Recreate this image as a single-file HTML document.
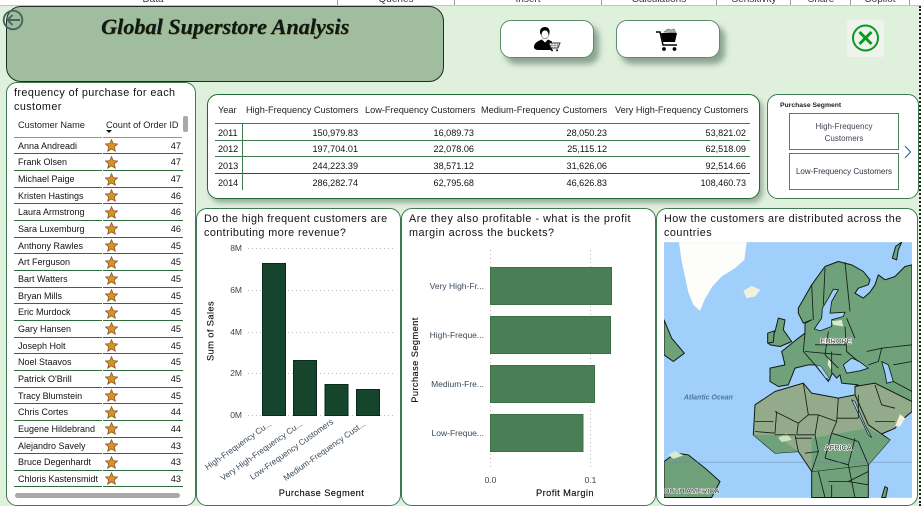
<!DOCTYPE html>
<html><head><meta charset="utf-8">
<style>
*{box-sizing:border-box;margin:0;padding:0}
html,body{width:921px;height:506px;overflow:hidden}
body{background:#dff0dd;font-family:"Liberation Sans",sans-serif;color:#111;position:relative}
.a{position:absolute;white-space:nowrap}
.panel{position:absolute;background:#fff;border:1px solid #3d7a50;border-radius:11px}
#top{left:0;top:0;width:921px;height:6px;background:#fff;border-bottom:1px solid #bcc8bc;overflow:hidden}
#top span{position:absolute;top:-6.5px;font-size:10px;color:#333;transform:translateX(-50%)}
#top i{position:absolute;top:0;width:1px;height:5px;background:#999}
.th{font-size:9.2px;top:105px;color:#222}
.n{font-size:9.1px;text-align:right;width:100px;color:#111}
.l{position:absolute;height:1px;left:215px;width:535px;background:#3d7a50}
#rows{position:absolute;left:14px;top:137.7px;width:169px}
.r{display:flex;height:16.67px}
.r b{font-weight:400;font-size:9px;line-height:15px;padding-top:1px;height:16.67px;width:88px;padding-left:4px;margin-right:1px;border-bottom:1px solid #2f6a3d;white-space:nowrap;overflow:hidden}
.r u{text-decoration:none;font-size:9.2px;line-height:15px;padding-top:1px;height:16.67px;width:80px;text-align:right;padding-right:2px;border-bottom:1px solid #2f6a3d;position:relative}
.r svg{position:absolute;left:2px;top:1.500px;width:13px;height:13px}
.ct{font-size:10.8px;line-height:13.5px;letter-spacing:.42px;color:#111}
</style></head><body>
<svg width="0" height="0" style="position:absolute"><defs><polygon id="st" points="6.5,0.6 8.2,4.6 12.5,5 9.3,7.8 10.3,12.2 6.5,9.9 2.7,12.2 3.7,7.8 0.5,5 4.8,4.6" fill="#d8922c" stroke="#8a5a1c" stroke-width=".8"/></defs></svg>

<div id="top" class="a">
<span style="left:153px">Data</span><span style="left:396px">Queries</span><span style="left:528px">Insert</span><span style="left:659px">Calculations</span><span style="left:754px">Sensitivity</span><span style="left:821px">Share</span><span style="left:880px">Copilot</span>
<i style="left:337px"></i><i style="left:454px"></i><i style="left:601px"></i><i style="left:716px"></i><i style="left:790px"></i><i style="left:850px"></i><i style="left:909px"></i>
</div>
<div class="a" style="left:919px;top:6px;width:0;height:500px;border-left:2px dotted #222"></div>

<!-- header -->
<div class="a" style="left:6px;top:6px;width:438px;height:76px;background:#a0bda0;border:1px solid #1f2d22;border-radius:15px"></div>
<div class="a" style="left:101px;top:14px;font:italic bold 22.2px 'Liberation Serif',serif;color:#0c1a14;text-shadow:.6px .6px 0 #6a5a20">Global Superstore Analysis</div>
<svg class="a" style="left:2px;top:8px" width="24" height="24" viewBox="0 0 24 24" fill="none" stroke="#47665a" stroke-width="1.900"><circle cx="11" cy="12" r="9.300"/><path d="M18 12H5.500M10.500 7l-5 5 5 5"/></svg>

<!-- buttons -->
<div class="a" style="left:500px;top:20px;width:94px;height:38px;background:#fff;border:1px solid #5f8a70;border-radius:11px;box-shadow:5px 6px 6px rgba(70,100,80,.55)"></div>
<div class="a" style="left:616px;top:20px;width:104px;height:38px;background:#fff;border:1px solid #5f8a70;border-radius:11px;box-shadow:5px 6px 6px rgba(70,100,80,.55)"></div>
<svg class="a" style="left:534px;top:27px" width="28" height="25" viewBox="0 0 28 25"><path d="M6 6C5.500 2 8 0 11 0S16 2 15.500 6L15 8C14 4.500 8 4.500 7 8Z" fill="#000"/><ellipse cx="11" cy="7.500" rx="3.600" ry="4.300" fill="#fff" stroke="#222" stroke-width=".5"/><path d="M0 20C0 15.500 5 13.500 8 12.500L11 15.500 14 12.500 18 14.500V23H5C2 23 0 22 0 20Z" fill="#000"/><path d="M15 16h11l-2 5h-7z" fill="#fff" stroke="#333" stroke-width="1"/><path d="M18 16v5M21 16v5M23.500 16v5M16 18.500h9" stroke="#666" stroke-width=".6"/><circle cx="18" cy="23.300" r="1.100" fill="#222"/><circle cx="23" cy="23.300" r="1.100" fill="#222"/></svg>
<svg class="a" style="left:655px;top:27px" width="26" height="25" viewBox="0 0 26 25"><path d="M9 5l4-3 3 1 3-1 2 4z" fill="#aaa" stroke="#666" stroke-width=".6"/><path d="M1 5h4l3 13h14" fill="none" stroke="#000" stroke-width="1.500"/><path d="M6 6h16l-2 9H8z" fill="#000"/><circle cx="9" cy="22" r="1.900" fill="#000"/><circle cx="19.500" cy="22" r="1.900" fill="#000"/></svg>
<div class="a" style="left:847px;top:20px;width:37px;height:37px;background:#eef3ee"></div>
<svg class="a" style="left:851px;top:24px" width="30" height="30" viewBox="0 0 30 30" fill="none" stroke="#0a9a1e"><circle cx="14.500" cy="14" r="12.500" stroke-width="2"/><path d="M8.500 8l12 12M20.500 8l-12 12" stroke-width="3"/></svg>

<!-- left list -->
<div class="panel" style="left:6px;top:82px;width:190px;height:424px"></div>
<div class="a ct" style="left:14px;top:87px">frequency of purchase for each<br>customer</div>
<div class="a" style="left:18px;top:120px;font-size:9.200px;color:#222">Customer Name</div>
<div class="a" style="left:106px;top:120px;font-size:9.200px;color:#222">Count of Order ID</div>
<div class="a" style="left:106px;top:130px;width:0;height:0;border-left:3px solid transparent;border-right:3px solid transparent;border-top:3.500px solid #111"></div>
<div class="a" style="left:14px;top:137px;width:88px;height:1px;background:#7f9f88"></div>
<div class="a" style="left:103px;top:137px;width:79px;height:1px;background:#7f9f88"></div>
<div class="a" style="left:183px;top:116px;width:5px;height:16px;background:#a8a8a8;border-radius:2px"></div>
<div id="rows">
<div class="r"><b>Anna Andreadi</b><u><svg viewBox="0 0 13 13"><use href="#st"/></svg>47</u></div>
<div class="r"><b>Frank Olsen</b><u><svg viewBox="0 0 13 13"><use href="#st"/></svg>47</u></div>
<div class="r"><b>Michael Paige</b><u><svg viewBox="0 0 13 13"><use href="#st"/></svg>47</u></div>
<div class="r"><b>Kristen Hastings</b><u><svg viewBox="0 0 13 13"><use href="#st"/></svg>46</u></div>
<div class="r"><b>Laura Armstrong</b><u><svg viewBox="0 0 13 13"><use href="#st"/></svg>46</u></div>
<div class="r"><b>Sara Luxemburg</b><u><svg viewBox="0 0 13 13"><use href="#st"/></svg>46</u></div>
<div class="r"><b>Anthony Rawles</b><u><svg viewBox="0 0 13 13"><use href="#st"/></svg>45</u></div>
<div class="r"><b>Art Ferguson</b><u><svg viewBox="0 0 13 13"><use href="#st"/></svg>45</u></div>
<div class="r"><b>Bart Watters</b><u><svg viewBox="0 0 13 13"><use href="#st"/></svg>45</u></div>
<div class="r"><b>Bryan Mills</b><u><svg viewBox="0 0 13 13"><use href="#st"/></svg>45</u></div>
<div class="r"><b>Eric Murdock</b><u><svg viewBox="0 0 13 13"><use href="#st"/></svg>45</u></div>
<div class="r"><b>Gary Hansen</b><u><svg viewBox="0 0 13 13"><use href="#st"/></svg>45</u></div>
<div class="r"><b>Joseph Holt</b><u><svg viewBox="0 0 13 13"><use href="#st"/></svg>45</u></div>
<div class="r"><b>Noel Staavos</b><u><svg viewBox="0 0 13 13"><use href="#st"/></svg>45</u></div>
<div class="r"><b>Patrick O'Brill</b><u><svg viewBox="0 0 13 13"><use href="#st"/></svg>45</u></div>
<div class="r"><b>Tracy Blumstein</b><u><svg viewBox="0 0 13 13"><use href="#st"/></svg>45</u></div>
<div class="r"><b>Chris Cortes</b><u><svg viewBox="0 0 13 13"><use href="#st"/></svg>44</u></div>
<div class="r"><b>Eugene Hildebrand</b><u><svg viewBox="0 0 13 13"><use href="#st"/></svg>44</u></div>
<div class="r"><b>Alejandro Savely</b><u><svg viewBox="0 0 13 13"><use href="#st"/></svg>43</u></div>
<div class="r"><b>Bruce Degenhardt</b><u><svg viewBox="0 0 13 13"><use href="#st"/></svg>43</u></div>
<div class="r"><b>Chloris Kastensmidt</b><u><svg viewBox="0 0 13 13"><use href="#st"/></svg>43</u></div>
</div>
<div class="a" style="left:15px;top:493px;width:165px;height:5px;background:#a8a8a8;border-radius:3px"></div>

<!-- table -->
<div class="panel" style="left:207px;top:94px;width:553px;height:105px;border-color:#1f6a35;box-shadow:3px 4px 5px rgba(70,100,80,.45)"></div>
<div class="a th" style="left:218px">Year</div>
<div class="a th" style="left:246px">High-Frequency Customers</div>
<div class="a th" style="left:365px">Low-Frequency Customers</div>
<div class="a th" style="left:481px">Medium-Frequency Customers</div>
<div class="a th" style="left:615px">Very High-Frequency Customers</div>
<div class="l" style="top:123px"></div><div class="l" style="top:140px"></div><div class="l" style="top:156px"></div><div class="l" style="top:173px;background:#1f5a30"></div>
<div class="a" style="left:242px;top:123px;width:1px;height:67px;background:#3d7a50"></div>
<div class="a" style="left:218px;top:128px;font-size:9.100px">2011</div><div class="a" style="left:218px;top:144px;font-size:9.100px">2012</div><div class="a" style="left:218px;top:161px;font-size:9.100px">2013</div><div class="a" style="left:218px;top:178px;font-size:9.100px">2014</div>
<div class="a n" style="left:258px;top:128px">150,979.83</div><div class="a n" style="left:374px;top:128px">16,089.73</div><div class="a n" style="left:507px;top:128px">28,050.23</div><div class="a n" style="left:646px;top:128px">53,821.02</div>
<div class="a n" style="left:258px;top:144px">197,704.01</div><div class="a n" style="left:374px;top:144px">22,078.06</div><div class="a n" style="left:507px;top:144px">25,115.12</div><div class="a n" style="left:646px;top:144px">62,518.09</div>
<div class="a n" style="left:258px;top:161px">244,223.39</div><div class="a n" style="left:374px;top:161px">38,571.12</div><div class="a n" style="left:507px;top:161px">31,626.06</div><div class="a n" style="left:646px;top:161px">92,514.66</div>
<div class="a n" style="left:258px;top:178px">286,282.74</div><div class="a n" style="left:374px;top:178px">62,795.68</div><div class="a n" style="left:507px;top:178px">46,626.83</div><div class="a n" style="left:646px;top:178px">108,460.73</div>

<!-- slicer -->
<div class="panel" style="left:767px;top:94px;width:152px;height:105px"></div>
<div class="a" style="left:780px;top:102px;font-size:6.800px;font-weight:bold;color:#222">Purchase Segment</div>
<div class="a" style="left:789px;top:113px;width:110px;height:37px;border:1px solid #4d8560;font-size:8px;line-height:12px;text-align:center;padding-top:7px;color:#445">High-Frequency<br>Customers</div>
<div class="a" style="left:789px;top:153px;width:110px;height:37px;border:1px solid #4d8560;font-size:8px;line-height:35px;text-align:center;color:#334">Low-Frequency Customers</div>
<svg class="a" style="left:903px;top:145px" width="10" height="14" fill="none" stroke="#2a6f9a" stroke-width="1.200"><path d="M2 1l5.500 6L2 13"/></svg>

<!-- panels -->
<div class="panel" style="left:196px;top:208px;width:205px;height:298px"></div>
<div class="panel" style="left:401px;top:208px;width:255px;height:298px"></div>
<div class="panel" style="left:656px;top:208px;width:262px;height:298px"></div>
<div class="a ct" style="left:204px;top:213px">Do the high frequent customers are<br>contributing more revenue?</div>
<div class="a ct" style="left:409px;top:213px;letter-spacing:.52px">Are they also profitable - what is the profit<br>margin across the buckets?</div>
<div class="a ct" style="left:664px;top:213px;letter-spacing:.48px">How the customers are distributed across the<br>countries</div>

<!-- column + bar charts -->
<svg class="a" style="left:0;top:0" width="921" height="506" font-family="Liberation Sans, sans-serif">
<g stroke="#bbb" stroke-dasharray="1 3" stroke-width="1">
<path d="M248 248.500H393M248 290.500H393M248 332.500H393M248 373.500H393M248 415.500H393"/>
<path d="M490.500 250V470M590.500 250V470"/>
</g>
<g font-size="8.500" fill="#444" text-anchor="end">
<text x="242" y="251">8M</text><text x="242" y="293">6M</text><text x="242" y="335">4M</text><text x="242" y="376">2M</text><text x="242" y="418">0M</text>
</g>
<g fill="#16452d" stroke="#0b2a1b" stroke-width="1">
<rect x="262.500" y="263.500" width="23" height="152"/><rect x="293.500" y="360.500" width="23" height="55"/><rect x="325" y="384.500" width="23" height="31"/><rect x="356.500" y="389.500" width="23" height="26"/>
</g>
<text transform="translate(213.500,331) rotate(-90)" font-size="9.300" text-anchor="middle" fill="#111" letter-spacing=".4" stroke="#111" stroke-width=".15">Sum of Sales</text>
<g font-size="8.300" fill="#3a4a5a" text-anchor="end">
<text transform="translate(272,425) rotate(-35)">High-Frequency Cu...</text>
<text transform="translate(303,425) rotate(-35)">Very High-Frequency Cu...</text>
<text transform="translate(334,423) rotate(-35)">Low-Frequency Customers</text>
<text transform="translate(366,425) rotate(-35)">Medium-Frequency Cust...</text>
</g>
<text x="321.500" y="496" font-size="9.300" text-anchor="middle" letter-spacing=".4" fill="#111" stroke="#111" stroke-width=".15">Purchase Segment</text>

<g fill="#4a7f55" stroke="#3c7048" stroke-width="1">
<rect x="490.500" y="267.500" width="121" height="37"/><rect x="490.500" y="316.500" width="120" height="37"/><rect x="490.500" y="365.500" width="104" height="37"/><rect x="490.500" y="414.500" width="92.500" height="37"/>
</g>
<g font-size="8.500" fill="#3a4a5a" text-anchor="end">
<text x="484" y="289">Very High-Fr...</text><text x="484" y="338">High-Freque...</text><text x="484" y="387">Medium-Fre...</text><text x="484" y="436">Low-Freque...</text>
</g>
<text x="490.500" y="483" font-size="8.500" fill="#444" text-anchor="middle">0.0</text>
<text x="590.500" y="483" font-size="8.500" fill="#444" text-anchor="middle">0.1</text>
<text transform="translate(418,360) rotate(-90)" font-size="9.300" text-anchor="middle" fill="#111" letter-spacing=".4" stroke="#111" stroke-width=".15">Purchase Segment</text>
<text x="565" y="496" font-size="9.300" text-anchor="middle" letter-spacing=".4" fill="#111" stroke="#111" stroke-width=".15">Profit Margin</text>
</svg>

<!-- map -->
<svg class="a" style="left:664px;top:242px" width="248" height="256" viewBox="27 112 744 767" stroke-linejoin="round">
<rect x="27" y="112" width="744" height="767" fill="#9fcffa"/>
<path d="M72 112H275L268 165 240 190 200 215 172 245 150 282 135 318 115 300 100 262 90 215 80 170Z" fill="#fdfdfa"/>
<path d="M265 258 290 243 316 255 300 275 275 280Z" fill="#f2f2dc"/>
<g fill="#6fa27a" stroke="#101a14" stroke-width="3">
<path d="M27 345 50 400 88 445 55 470 27 450Z"/>
<path d="M27 770 62 745 100 750 150 790 195 830 170 878H27Z"/>
<path d="M712 160 722 125 740 112 730 135 725 165Z"/>
<path d="M430 310 470 240 510 185 550 170 590 180 625 200 645 225 640 240 610 250 600 265 625 280 645 262 660 240 670 210 690 225 720 215 750 185 771 180V620L735 650 720 670 650 700 630 660 600 590 600 545 610 540 560 535 555 510 545 520 532 505 520 530 500 505 480 480 460 480 420 490 400 540 370 545 345 530 345 490 390 480 380 440 430 400 450 385 450 355 470 345 445 355 430 325Z"/>
<path d="M340 415 360 380 370 340 390 345 385 375 410 410 375 425 345 420Z"/>
<path d="M338 385 358 378 355 412 338 415Z"/>
<path d="M470 790 640 740 640 878H470Z"/>
<path d="M680 878 690 845 698 850 692 878Z"/>
</g>
<path d="M600 545 660 535 771 590V620L735 650 720 670 650 700 630 660 600 590Z" fill="#93ab8b" stroke="#101a14" stroke-width="3"/>
<path d="M300 600 360 560 445 535 470 565 550 580 600 570 640 660 705 705 640 780 470 800 430 740 360 745 295 690Z" fill="#93ab8b" stroke="#101a14" stroke-width="3"/>
<path d="M295 690 360 690 430 740 360 745Z M470 700 640 670 705 705 640 780 470 800Z" fill="#6fa27a"/>
<g fill="#9fcffa" stroke="#101a14" stroke-width="2.500">
<path d="M535 253 550 255 530 290 525 325 570 322 565 335 530 345 530 365 495 378 478 372 500 340 502 310 520 280Z"/>
<path d="M565 480 590 460 610 468 640 490 615 498 575 505Z"/>
<path d="M680 470 700 480 715 530 695 535 690 505Z"/>
<path d="M590 585 600 590 630 660 650 698 640 690Z" stroke-width="2"/>
<path d="M482 480 498 484 526 525 512 520Z" stroke-width="1.500"/>
</g>
<path d="M720 665 735 628 750 640 735 665Z" fill="#f5f0e0"/>
<path d="M520 460 530 475 528 495 518 480Z" fill="#d6ead0"/>
<path d="M370 700 395 685 410 705 380 712Z" fill="#c8e6bf"/>
<path d="M530 350 560 345 565 365 535 360Z" fill="#d6ead0"/>
<path d="M40 750 60 738 85 752 55 762Z" fill="#d6ead0"/>
<g fill="none" stroke="#101a14" stroke-width="2.500">
<path d="M470 240 475 345M510 190 505 300M570 172 585 320M450 385 445 440 480 480M520 380 510 450 550 490M570 365 575 440 610 470M480 420H575M450 440 560 450M530 440 530 505M575 340 600 400M635 440 680 430 670 470 640 480M680 430 771 420M715 480 771 470M715 530 771 560M660 540 680 600 720 610"/>
<path d="M360 620 430 655 460 630 445 535M430 655 425 690M365 620 360 685 300 680M460 630 490 630 545 650 550 580M545 650 530 685 610 710M490 630 480 690 425 690M610 640 610 570M610 640 545 640M360 690 420 690 430 740M480 690 490 740 470 800M530 685 510 760M610 710 640 780M600 700 580 780 600 878M510 760 580 780M490 800 510 878M640 800 580 830 640 840M660 650 720 650M300 650 355 650M420 700 470 700M450 745 490 740M520 830 580 830M530 840 530 878"/>
</g>
<line x1="27" y1="772" x2="771" y2="772" stroke="#6a7fa0" stroke-width="2" opacity=".7"/>
<g font-family="Liberation Sans, sans-serif" font-size="22">
<text x="160" y="584" font-size="21" font-style="italic" font-weight="bold" text-anchor="middle" fill="#4d75a0">Atlantic Ocean</text>
<text x="543" y="416" text-anchor="middle" fill="#333" stroke="#fff" stroke-width="4" paint-order="stroke">EUROPE</text>
<text x="550" y="736" text-anchor="middle" fill="#333" stroke="#fff" stroke-width="4" paint-order="stroke">AFRICA</text>
<text x="110" y="866" text-anchor="middle" fill="#333" stroke="#fff" stroke-width="3" paint-order="stroke">OUTH AMERICA</text>
</g>
</svg>
</body></html>
